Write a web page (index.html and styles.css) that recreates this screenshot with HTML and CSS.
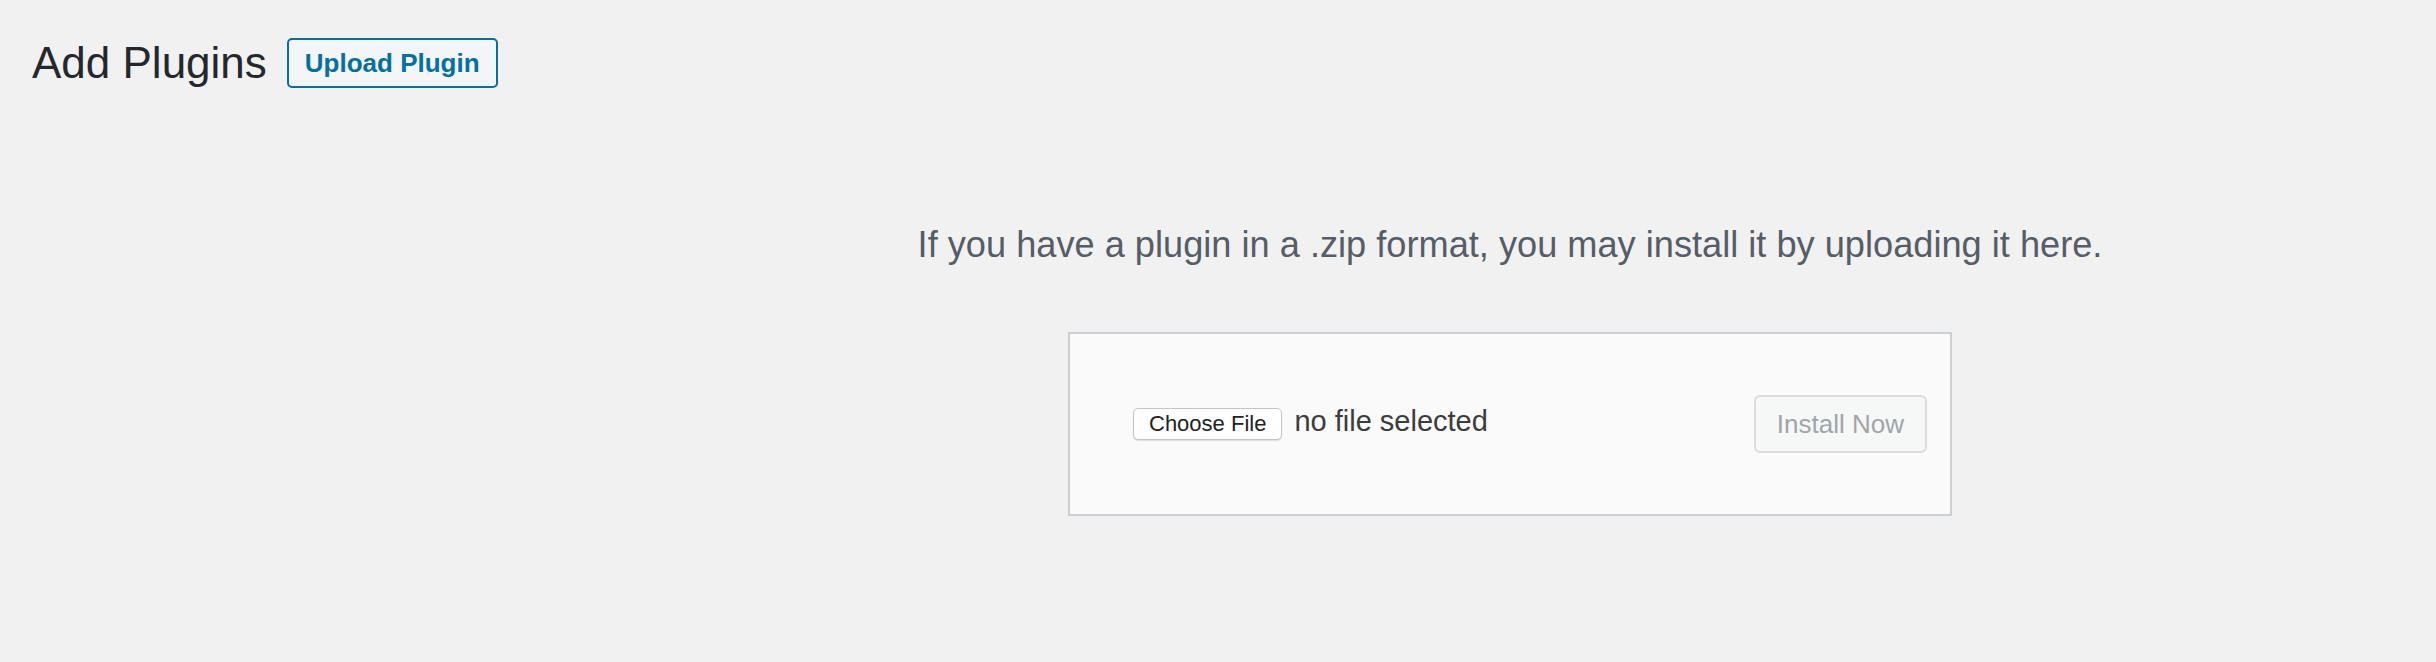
FILE: index.html
```html
<!DOCTYPE html>
<html lang="en">
<head>
<meta charset="utf-8">
<title>Add Plugins</title>
<link rel="stylesheet" href="styles.css">
</head>
<body>
<div class="wrap">
  <div class="page-header">
    <h1 class="page-title">Add Plugins</h1>
    <button class="page-title-action" type="button">Upload Plugin</button>
  </div>
  <div class="upload-plugin">
    <p class="install-help">If you have a plugin in a .zip format, you may install it by uploading it here.</p>
    <form class="upload-form">
      <div class="file-input">
        <button class="choose-file" type="button">Choose File</button>
        <span class="file-status">no file selected</span>
      </div>
      <button class="install-now" type="button" disabled>Install Now</button>
    </form>
  </div>
</div>
</body>
</html>
```
FILE: styles.css
```css
* { box-sizing: border-box; }
html, body {
  margin: 0;
  padding: 0;
  background: #f1f1f1;
  font-family: "Liberation Sans", Arial, sans-serif;
}
.wrap {
  width: 2436px;
  height: 662px;
  overflow: hidden;
}
.page-header {
  display: flex;
  align-items: center;
  gap: 20px;
  padding: 34px 0 0 32px;
}
.page-title {
  margin: 0;
  font-size: 44px;
  font-weight: 400;
  line-height: 58px;
  color: #23282d;
}
.page-title-action {
  height: 50px;
  padding: 0 16px;
  border: 2px solid #0071a1;
  border-radius: 5px;
  background: #f3f5f6;
  color: #0071a1;
  font-family: "Liberation Sans", Arial, sans-serif;
  font-size: 26px;
  font-weight: 700;
  line-height: 46px;
}
.upload-plugin {
  display: flex;
  flex-direction: column;
  align-items: center;
  padding-left: 584px;
}
.install-help {
  margin: 128px 0 0;
  font-size: 36.2px;
  line-height: 50px;
  color: #555d66;
  white-space: nowrap;
}
.upload-form {
  margin-top: 62px;
  width: 884px;
  height: 184px;
  display: flex;
  align-items: center;
  justify-content: space-between;
  padding: 61px 23px 61px 63px;
  border: 2px solid #ccd0d4;
  background: #fafafa;
}
.file-input {
  display: flex;
  align-items: center;
  gap: 12px;
}
.choose-file {
  height: 32px;
  padding: 0 15px;
  border: 1px solid #c4c4c4;
  border-radius: 5px;
  background: #ffffff;
  box-shadow: 0 1px 1px rgba(0, 0, 0, 0.12);
  color: #222222;
  font-family: "Liberation Sans", Arial, sans-serif;
  font-size: 22px;
  line-height: 30px;
}
.file-status {
  font-size: 29px;
  line-height: 34px;
  color: #3c3c3c;
  position: relative;
  top: -3px;
}
.install-now {
  height: 58px;
  padding: 0 21px;
  border: 2px solid #dcdcde;
  border-radius: 6px;
  background: #f6f7f7;
  color: #a0a5aa;
  font-family: "Liberation Sans", Arial, sans-serif;
  font-size: 26px;
  line-height: 54px;
}
```
